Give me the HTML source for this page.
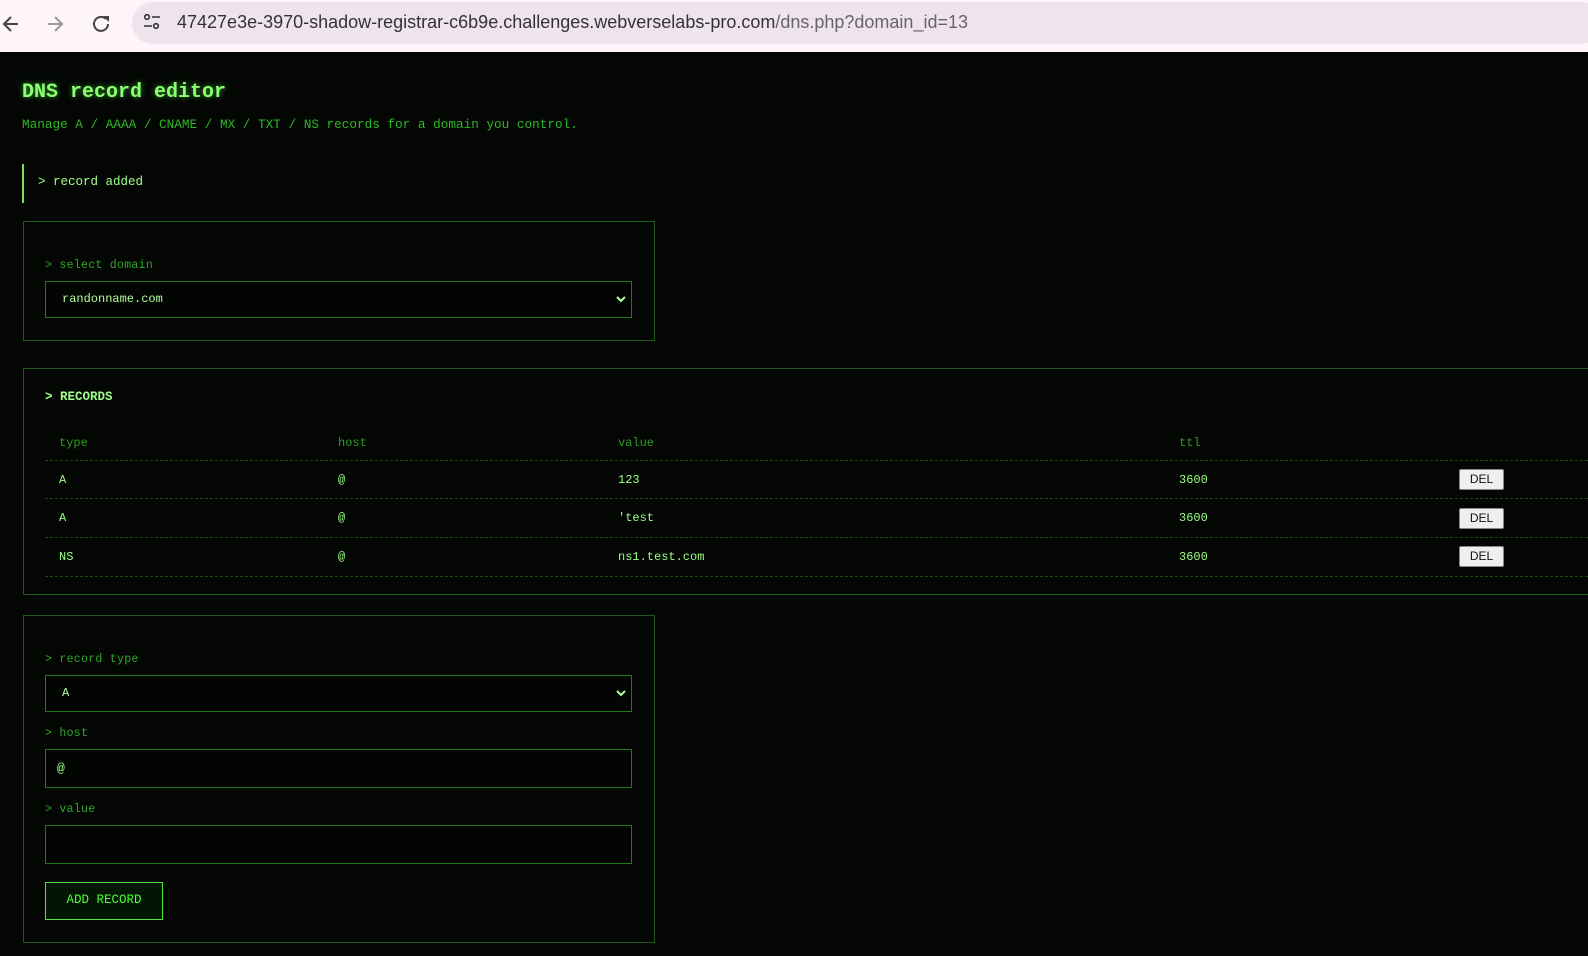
<!DOCTYPE html>
<html><head><meta charset="utf-8"><style>
*{margin:0;padding:0;box-sizing:border-box}
body{width:1588px;height:956px;overflow:hidden;background:#030603;font-family:"Liberation Mono","DejaVu Sans Mono",monospace;position:relative;color:#7dff6a}
.a{position:absolute;white-space:nowrap}
.bar{position:absolute;left:0;top:0;width:1588px;height:52px;background:#fdf5f8}
.pill{position:absolute;left:132px;top:2px;width:1470px;height:42px;border-radius:21px;background:#efe4ee}
.url{font-family:"Liberation Sans",sans-serif;font-size:18px;color:#333;top:12px;left:177px}
.url span{color:#666}
.box{position:absolute;border:1px solid #1c5a16}
.lbl{font-size:11.5px;color:#2fa82a;letter-spacing:.3px}
.inp{position:absolute;border:1px solid #1f7a1a;background:#020502}
.th{font-size:12px;color:#2c9e22}
.td{font-size:12px;color:#9cff86}
.hr{position:absolute;left:45px;width:1543px;border-top:1px dashed #1a4a12}
.del{position:absolute;left:1459px;width:45px;height:21px;background:#efefef;border:1px solid #888;border-radius:2px;font-family:"Liberation Sans",sans-serif;font-size:12px;color:#111;text-align:center;line-height:19px}
</style></head><body>
<div class="bar"></div><div class="pill"></div>
<svg class="a" style="left:2px;top:13px" width="140" height="22" viewBox="0 0 140 22">
<path d="M16 11H3M9 4l-7 7 7 7" fill="none" stroke="#444" stroke-width="2"/>
<path d="M46 11h13M53 4l7 7-7 7" fill="none" stroke="#999" stroke-width="2"/>
<path d="M104 6a7 7 0 1 0 2 5" fill="none" stroke="#444" stroke-width="2"/><path d="M101 3h6v6z" fill="#444"/>
</svg>
<svg class="a" style="left:142px;top:12px" width="20" height="20"><circle cx="5" cy="5" r="2.3" fill="none" stroke="#333" stroke-width="1.6"/><path d="M10 5h8M2 14h8" stroke="#333" stroke-width="1.6"/><circle cx="14" cy="14" r="2.3" fill="none" stroke="#333" stroke-width="1.6"/></svg>
<div class="a url">47427e3e-3970-shadow-registrar-c6b9e.challenges.webverselabs-pro.com<span>/dns.php?domain_id=13</span></div>

<div class="a" style="left:22px;top:81px;font-size:20px;font-weight:bold;color:#8dff74;text-shadow:0 0 6px #3c9e2c">DNS record editor</div>
<div class="a" style="left:22px;top:117px;font-size:12.7px;color:#2fb825">Manage A / AAAA / CNAME / MX / TXT / NS records for a domain you control.</div>
<div class="a" style="left:22px;top:164px;width:2px;height:39px;background:#7dde5e"></div>
<div class="a" style="left:38px;top:175px;font-size:12.5px;color:#a0ff8a">&gt; record added</div>

<div class="box" style="left:23px;top:221px;width:632px;height:120px"></div>
<div class="a lbl" style="left:45px;top:259px">&gt; select domain</div>
<div class="inp" style="left:45px;top:281px;width:587px;height:37px"></div>
<div class="a td" style="left:62px;top:292px;color:#b4ff9e">randonname.com</div>
<svg class="a" style="left:615px;top:294px" width="12" height="10"><path d="M2 3l4 4 4-4" fill="none" stroke="#b4ff9e" stroke-width="2"/></svg>

<div class="box" style="left:23px;top:368px;width:1580px;height:227px"></div>
<div class="a" style="left:45px;top:390px;font-size:12.5px;font-weight:bold;color:#a0ff8a">&gt; RECORDS</div>
<div class="a th" style="left:59px;top:436px">type</div>
<div class="a th" style="left:338px;top:436px">host</div>
<div class="a th" style="left:618px;top:436px">value</div>
<div class="a th" style="left:1179px;top:436px">ttl</div>
<div class="hr" style="top:460px"></div>
<div class="hr" style="top:498px"></div>
<div class="hr" style="top:537px"></div>
<div class="hr" style="top:576px"></div>
<div class="a td" style="left:59px;top:473px">A</div><div class="a td" style="left:338px;top:473px">@</div><div class="a td" style="left:618px;top:473px">123</div><div class="a td" style="left:1179px;top:473px">3600</div><div class="del" style="top:469px">DEL</div>
<div class="a td" style="left:59px;top:511px">A</div><div class="a td" style="left:338px;top:511px">@</div><div class="a td" style="left:618px;top:511px">'test</div><div class="a td" style="left:1179px;top:511px">3600</div><div class="del" style="top:508px">DEL</div>
<div class="a td" style="left:59px;top:550px">NS</div><div class="a td" style="left:338px;top:550px">@</div><div class="a td" style="left:618px;top:550px">ns1.test.com</div><div class="a td" style="left:1179px;top:550px">3600</div><div class="del" style="top:546px">DEL</div>

<div class="box" style="left:23px;top:615px;width:632px;height:328px"></div>
<div class="a lbl" style="left:45px;top:653px">&gt; record type</div>
<div class="inp" style="left:45px;top:675px;width:587px;height:37px"></div>
<div class="a td" style="left:62px;top:686px;color:#b4ff9e">A</div>
<svg class="a" style="left:615px;top:688px" width="12" height="10"><path d="M2 3l4 4 4-4" fill="none" stroke="#b4ff9e" stroke-width="2"/></svg>
<div class="a lbl" style="left:45px;top:727px">&gt; host</div>
<div class="inp" style="left:45px;top:749px;width:587px;height:39px"></div>
<div class="a td" style="left:57px;top:761px;font-size:13px">@</div>
<div class="a lbl" style="left:45px;top:803px">&gt; value</div>
<div class="inp" style="left:45px;top:825px;width:587px;height:39px"></div>
<div class="a" style="left:45px;top:882px;width:118px;height:38px;border:1.5px solid #4be838;background:#031503;color:#4cff36;font-size:12.5px;text-align:center;line-height:35px">ADD RECORD</div>
</body></html>
